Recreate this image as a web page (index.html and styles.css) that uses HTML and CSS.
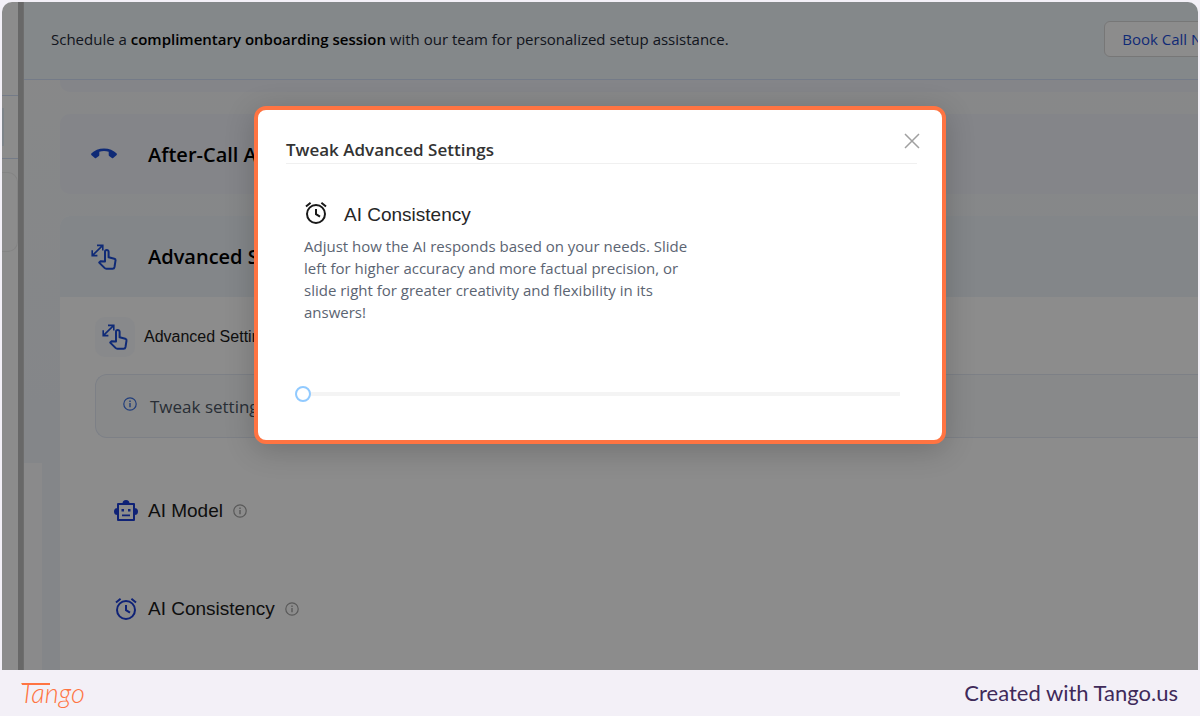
FILE: index.html
```html
<!DOCTYPE html>
<html lang="en">
<head>
    <meta charset="UTF-8">
    <meta name="viewport" content="width=device-width, initial-scale=1.0">
    <title>Tweak Advanced Settings</title>
    <link rel="stylesheet" href="styles.css">
</head>
<body>
    <svg width="0" height="0" class="sprite" aria-hidden="true">
        <symbol id="icon-alarm" viewBox="0 0 24 24">
            <g fill="none" stroke="currentColor" stroke-width="2">
                <circle cx="12" cy="13" r="9"/>
                <path d="M12 8v5.2l4 2.5M2 5.6l4.6-3.8M22 5.6l-4.6-3.8"/>
            </g>
        </symbol>
        <symbol id="icon-gesture" viewBox="0 0 26 26">
            <g fill="none" stroke="currentColor" stroke-width="1.6" stroke-linejoin="round">
                <path d="M1.5 11.3L11.5 1.7M6 1.4h5.8v5.2M1.2 6.2v5.4h5.2" stroke-linejoin="miter"/>
                <path stroke-width="2" d="M14 17.500V7.700a1.800 1.800 0 0 1 3.600 0v5.600l5.700 1.500c1 .3 1.400 1 1.200 1.900l-1 6.300c-.2 1.100-.8 1.700-1.900 1.700h-6.300c-.7 0-1.300-.3-1.800-.8l-5.300-5.300 1.400-1.300z"/>
            </g>
        </symbol>
        <symbol id="icon-info" viewBox="0 0 14 14">
            <circle cx="7" cy="7" r="6.2" fill="none" stroke="currentColor" stroke-width="1.2"/>
            <path d="M7 6v4.2M7 3.6v1.3" stroke="currentColor" stroke-width="1.4"/>
        </symbol>
    </svg>

    <div class="screen">
        <aside class="sidebar">
            <div class="side-top"></div>
            <div class="side-item"></div>
            <div class="side-card"></div>
        </aside>

        <main class="main">
            <div class="banner">
                <p>Schedule a <strong>complimentary onboarding session</strong> with our team for personalized setup assistance.</p>
                <button type="button" class="book">Book Call Now</button>
            </div>

            <div class="cards">
                <div class="card card-cut"></div>
                <div class="card">
                    <svg class="card-icon" viewBox="0 0 26 26" aria-hidden="true">
                        <path fill="currentColor" d="M0.300 12.600C3.300 9.300 8 7.400 13 7.400s9.700 1.900 12.700 5.200c.3.400.3.900 0 1.300l-3.500 3.200c-.4.300-.9.300-1.300 0l-2.800-2.200c-.3-.2-.4-.5-.4-.8v-3.300c-3.100-1-6.300-1-9.400 0v3.300c0 .3-.1.600-.4.800l-2.800 2.200c-.4.300-.9.300-1.300 0L.3 13.900c-.3-.4-.3-.9 0-1.300z"/>
                    </svg>
                    <h2>After-Call Actions</h2>
                </div>
                <section class="panel">
                    <div class="card card-open">
                        <svg class="card-icon" aria-hidden="true"><use href="#icon-gesture"/></svg>
                        <h2>Advanced Settings</h2>
                    </div>
                    <div class="panel-body">
                        <div class="panel-title">
                            <span class="tile"><svg aria-hidden="true"><use href="#icon-gesture"/></svg></span>
                            <h3>Advanced Settings</h3>
                        </div>
                        <div class="note">
                            <svg aria-hidden="true"><use href="#icon-info"/></svg>
                            <p>Tweak settings</p>
                        </div>
                        <div class="option">
                            <svg class="option-icon" viewBox="0 0 24 24" aria-hidden="true">
                                <path fill="none" stroke="currentColor" stroke-width="2" stroke-linejoin="round" d="M4 5h16v16H4z"/>
                                <path fill="currentColor" d="M8.500 4.500a3.500 3.500 0 0 1 7 0zM3.500 9v7a3.500 3.500 0 0 1 0-7zM20.500 9a3.500 3.500 0 0 1 0 7zM7.500 10h2.500v2.500H7.500zM14 10h2.500v2.500H14zM8 15.500h8v1.800H8z"/>
                            </svg>
                            <h3>AI Model</h3>
                            <svg class="hint" aria-hidden="true"><use href="#icon-info"/></svg>
                        </div>
                        <div class="option">
                            <svg class="option-icon" aria-hidden="true"><use href="#icon-alarm"/></svg>
                            <h3>AI Consistency</h3>
                            <svg class="hint" aria-hidden="true"><use href="#icon-info"/></svg>
                        </div>
                    </div>
                </section>
            </div>
        </main>

        <div class="backdrop">
            <div class="modal" role="dialog" aria-labelledby="modal-title">
                <button type="button" class="close" aria-label="Close">
                    <svg viewBox="0 0 16 16" aria-hidden="true"><path d="M1 1l14 14M15 1L1 15" stroke="currentColor" stroke-width="1.500"/></svg>
                </button>
                <h1 id="modal-title">Tweak Advanced Settings</h1>
                <div class="setting">
                    <div class="setting-head">
                        <svg aria-hidden="true"><use href="#icon-alarm"/></svg>
                        <label for="consistency">AI Consistency</label>
                    </div>
                    <p>Adjust how the AI responds based on your needs. Slide left for higher accuracy and more factual precision, or slide right for greater creativity and flexibility in its answers!</p>
                </div>
                <input type="range" id="consistency" class="slider" min="0" max="100" value="0">
            </div>
        </div>
    </div>

    <footer class="footer">
        <a href="#" class="logo">Tango</a>
        <span>Created with Tango.us</span>
    </footer>
</body>
</html>
```
FILE: styles.css
```css
* {
    box-sizing: border-box;
}
body {
    margin: 0;
    height: 100vh;
    display: flex;
    flex-direction: column;
    background: #f3f0f7;
    font-family: "Open Sans", "Noto Sans", sans-serif;
    color: #000;
}
h1, h2, h3, p {
    margin: 0;
    font-weight: normal;
}
svg {
    flex: none;
}
.sprite {
    position: absolute;
}
.screen {
    position: relative;
    flex: 1;
    min-height: 0;
    display: flex;
    margin: 2px 2px 0;
    border-radius: 10px 10px 0 0;
    overflow: hidden;
    background: #fff;
}
/* sidebar */
.sidebar {
    flex: none;
    width: 21px;
    border-right: 5px solid #bdbdbd;
}
.side-top {
    height: 94px;
    border-bottom: 1px solid #d3e0f7;
}
.side-item {
    height: 63px;
    border-bottom: 1px solid #d3e0f7;
    background: linear-gradient(#e6f0fa, #e6f0fa) left center / 2px 38px no-repeat;
}
.side-card {
    height: 80px;
    margin-top: 13px;
    border: 1px solid #f0f0f0;
    border-left: none;
    border-radius: 0 10px 10px 0;
}
/* page */
.main {
    flex: 1;
    min-width: 0;
    overflow: hidden;
    border-left: 1px solid #c8c8c8;
    background:
        linear-gradient(#fbfcfd, #fbfcfd) 0 461px / 18px 100% no-repeat,
        linear-gradient(180deg, #f8f8f9, #f1f5f9 60%);
}
.banner {
    display: flex;
    align-items: center;
    justify-content: space-between;
    height: 78px;
    padding: 0 0 3px 27px;
    background: #f0f7fb;
    border-bottom: 1px solid #d3e0f7;
    font-size: 15px;
    white-space: nowrap;
}
.banner p {
    color: #1f2937;
}
.banner strong {
    font-weight: 600;
    color: #000;
}
.book {
    flex: none;
    height: 36px;
    margin-right: -43px;
    padding: 0 17px;
    border: 1px solid #d9d9d9;
    border-radius: 6px;
    background: #fff;
    color: #1d4ed8;
    font: inherit;
}
.cards {
    padding-left: 36px;
}
.card {
    display: flex;
    align-items: center;
    gap: 31px;
    height: 80px;
    margin-bottom: 22px;
    padding-left: 31px;
    border-radius: 10px 0 0 10px;
    background: #f0f3fa;
}
.card-cut {
    height: 12px;
    border-radius: 0 0 0 10px;
}
.card h2 {
    font-size: 20px;
    font-weight: 600;
    white-space: nowrap;
}
.card-icon {
    width: 26px;
    height: 26px;
    color: #1d4ed8;
}
.card-open {
    height: 81px;
    margin-bottom: 0;
    border-radius: 10px 0 0 0;
    background: #eef4fa;
}
.panel {
    border-radius: 10px 0 0 0;
    background: #fff;
}
.panel-body {
    padding: 20px 0 40px 35px;
    font-family: "Liberation Sans", Arial, sans-serif;
}
.panel-title {
    display: flex;
    align-items: center;
    gap: 9px;
}
.panel-title h3 {
    font-size: 16px;
    color: #1a1a1a;
}
.tile {
    display: flex;
    align-items: center;
    justify-content: center;
    width: 40px;
    height: 40px;
    border-radius: 10px;
    background: #f7f9fe;
    color: #1d4ed8;
}
.tile svg {
    width: 26px;
    height: 26px;
}
.note {
    display: flex;
    align-items: center;
    gap: 13px;
    height: 64px;
    margin: 17px 0 60px;
    padding-left: 27px;
    border: 1px solid #e3e9f5;
    border-right: none;
    border-radius: 12px 0 0 12px;
    background: #f8fafc;
    font-family: "Open Sans", "Noto Sans", sans-serif;
    font-size: 17px;
    color: #4b5563;
}
.note svg {
    width: 14px;
    height: 14px;
    margin-bottom: 4px;
    color: #3b6fe0;
}
.option {
    display: flex;
    align-items: center;
    height: 26px;
    margin-bottom: 72px;
    padding-left: 19px;
}
.option h3 {
    margin: 0 10px;
    font-size: 19px;
    color: #1a1a1a;
}
.option-icon {
    width: 24px;
    height: 24px;
    color: #1d3fd8;
}
.hint {
    width: 14px;
    height: 14px;
    color: #a3a3a3;
}
/* dialog */
.backdrop {
    position: absolute;
    inset: 0;
    display: flex;
    align-items: flex-start;
    justify-content: center;
    padding-top: 104px;
    background: rgba(0, 0, 0, 0.45);
}
.modal {
    position: relative;
    width: 100%;
    max-width: 692px;
    padding: 28px 25px 38px 28px;
    border: 4px solid #ff7442;
    border-radius: 12px;
    background: #fff;
    box-shadow: 0 6px 30px rgba(0, 0, 0, 0.2);
}
.modal h1 {
    padding-bottom: 1px;
    border-bottom: 1px solid #f0f0f0;
    font-size: 17px;
    font-weight: 600;
    line-height: 24px;
    color: #333;
}
.close {
    position: absolute;
    top: 23px;
    right: 22px;
    width: 16px;
    height: 16px;
    padding: 0;
    border: none;
    background: none;
    color: #a0a0a0;
    cursor: pointer;
}
.close svg {
    display: block;
}
.setting {
    max-width: 414px;
    padding: 37px 0 0 18px;
}
.setting-head {
    display: flex;
    align-items: center;
    gap: 16px;
    height: 28px;
    font-family: "Liberation Sans", Arial, sans-serif;
    font-size: 19px;
    color: #262626;
}
.setting-head svg {
    width: 24px;
    height: 24px;
    margin-bottom: 4px;
    color: #1a1a1a;
}
.setting p {
    margin-top: 6px;
    font-size: 15px;
    line-height: 22px;
    color: #5b6472;
}
.slider {
    appearance: none;
    display: block;
    width: calc(100% - 26px);
    height: 16px;
    margin: 63px 0 0 9px;
    background: linear-gradient(#f4f4f4, #f4f4f4) center / 100% 4px no-repeat;
}
.slider::-webkit-slider-thumb {
    appearance: none;
    width: 16px;
    height: 16px;
    border: 2px solid #91caff;
    border-radius: 50%;
    background: #fff;
}
/* footer */
.footer {
    flex: none;
    display: flex;
    align-items: center;
    justify-content: space-between;
    height: 46px;
    padding: 0 22px 2px 20px;
    font-family: Lato, sans-serif;
    font-size: 22px;
    color: #3f2a5a;
}
.logo {
    position: relative;
    color: #ff7442;
    font-size: 27px;
    font-style: italic;
    font-weight: 300;
    text-decoration: none;
}
/* long bar of the T */
.logo::before {
    content: "";
    position: absolute;
    top: 7px;
    left: 2px;
    width: 28px;
    height: 2px;
    background: #ff7442;
}
```
